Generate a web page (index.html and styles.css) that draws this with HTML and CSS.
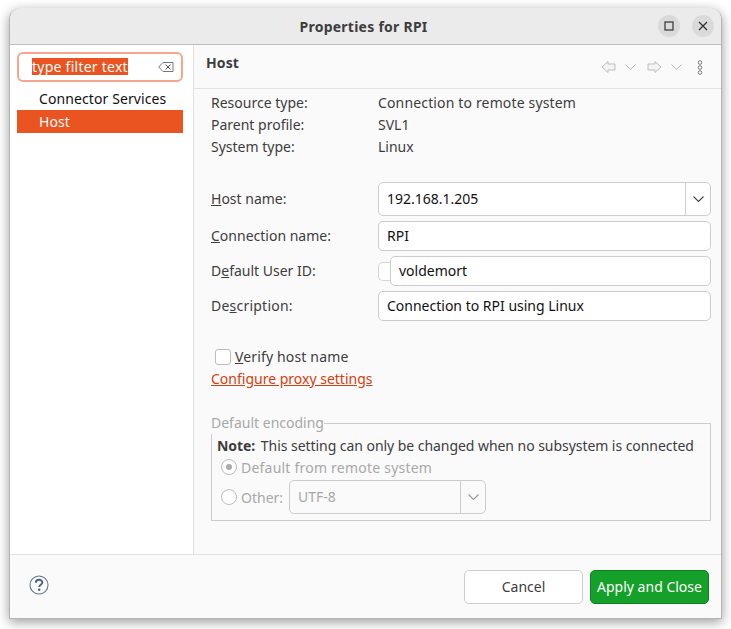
FILE: index.html
```html
<!DOCTYPE html>
<html lang="en">
<head>
    <meta charset="UTF-8">
    <title>Properties for RPI</title>
    <link rel="stylesheet" href="styles.css">
</head>
<body>
    <div class="window">
        <header class="titlebar">
            <h1>Properties for RPI</h1>
            <div class="window-buttons">
                <span class="round-btn"><svg width="10" height="10" viewBox="0 0 10 10"><rect x="1" y="1" width="8" height="8" fill="none" stroke="#333" stroke-width="1.2"/></svg></span>
                <span class="round-btn"><svg width="10" height="10" viewBox="0 0 10 10"><path d="M1 1l8 8M9 1l-8 8" fill="none" stroke="#333" stroke-width="1.3"/></svg></span>
            </div>
        </header>

        <div class="main">
            <aside class="sidebar">
                <div class="filter">
                    <span class="filter-text">type filter text</span>
                    <svg width="16" height="10" viewBox="0 0 16 10"><path d="M5 .5h10v9H5L.7 5z" fill="none" stroke="#777"/><path d="M7.5 2.5l5 5M12.5 2.5l-5 5" fill="none" stroke="#555"/></svg>
                </div>
                <ul class="tree">
                    <li>Connector Services</li>
                    <li class="selected">Host</li>
                </ul>
            </aside>

            <section class="content">
                <div class="content-head">
                    <h2>Host</h2>
                    <div class="toolbar">
                        <svg width="15" height="14" viewBox="0 0 15 14"><path d="M7 1.5L1 7l6 5.500V10h7V4H7z" fill="#f4f4f4" stroke="#bdbdbd"/></svg>
                        <svg class="chev" width="11" height="6" viewBox="0 0 11 6"><path d="M.5.5l5 5 5-5" fill="none" stroke="#b5b5b5"/></svg>
                        <svg width="15" height="14" viewBox="0 0 15 14"><path d="M8 1.500L14 7l-6 5.500V10H1V4h7z" fill="#f4f4f4" stroke="#bdbdbd"/></svg>
                        <svg class="chev" width="11" height="6" viewBox="0 0 11 6"><path d="M.5.5l5 5 5-5" fill="none" stroke="#b5b5b5"/></svg>
                        <svg class="dots" width="6" height="15" viewBox="0 0 6 15"><circle cx="3" cy="2.500" r="1.800" fill="#fff" stroke="#777"/><circle cx="3" cy="7.500" r="1.800" fill="#fff" stroke="#777"/><circle cx="3" cy="12.500" r="1.800" fill="#fff" stroke="#777"/></svg>
                    </div>
                </div>

                <div class="body">
                    <div class="info">
                        <span>Resource type:</span><span class="wide">Connection to remote system</span>
                        <span>Parent profile:</span><span>SVL1</span>
                        <span>System type:</span><span>Linux</span>
                    </div>

                    <div class="form">
                        <label><u>H</u>ost name:</label>
                        <div class="combo host-combo">
                            <span class="combo-value">192.168.1.205</span>
                            <span class="combo-arrow"><svg width="11" height="6" viewBox="0 0 11 6"><path d="M.5.5l5 5 5-5" fill="none" stroke="#444" stroke-width="1.100"/></svg></span>
                        </div>
                        <label><u>C</u>onnection name:</label>
                        <div class="field">RPI</div>
                        <label>D<u>e</u>fault User ID:</label>
                        <div class="user-row">
                            <span class="user-check"></span>
                            <div class="field user-field">voldemort</div>
                        </div>
                        <label class="wide-more">De<u>s</u>cription:</label>
                        <div class="field">Connection to RPI using Linux</div>
                    </div>

                    <div class="verify">
                        <span class="checkbox"></span>
                        <span class="wide"><u>V</u>erify host name</span>
                    </div>
                    <a class="proxy-link" href="#">Configure proxy settings</a>

                    <fieldset class="encoding">
                        <legend>Default encoding</legend>
                        <p class="note"><b>Note:</b> This setting can only be changed when no subsystem is connected</p>
                        <div class="radio-row">
                            <span class="radio checked"></span>
                            <span class="wide-more">Default from remote system</span>
                        </div>
                        <div class="radio-row other-row">
                            <span class="radio"></span>
                            <span>Other:</span>
                            <div class="combo encoding-combo">
                                <span class="combo-value">UTF-8</span>
                                <span class="combo-arrow"><svg width="11" height="6" viewBox="0 0 11 6"><path d="M.5.5l5 5 5-5" fill="none" stroke="#999" stroke-width="1.100"/></svg></span>
                            </div>
                        </div>
                    </fieldset>
                </div>
            </section>
        </div>

        <footer class="footer">
            <svg class="help" width="20" height="20" viewBox="0 0 21 21"><circle cx="10.500" cy="10.500" r="9.500" fill="#fbfbfb" stroke="#5f7396" stroke-width="1.100"/><path d="M7.200 8.200c0-4.300 6.800-4.300 6.800-.3 0 2.300-3.300 2.400-3.300 4.800" fill="none" stroke="#4a6088" stroke-width="2"/><circle cx="10.700" cy="15.500" r="1.300" fill="#4a6088"/></svg>
            <div class="actions">
                <button class="btn">Cancel</button>
                <button class="btn primary">Apply and Close</button>
            </div>
        </footer>
    </div>
</body>
</html>
```

FILE: styles.css
```css
* {
    box-sizing: border-box;
}

body {
    margin: 0;
    padding: 8px 9px 0;
    height: 629px;
    overflow: hidden;
    background: #fff;
    font-family: 'Noto Sans', sans-serif;
    font-size: 14px;
    color: #3d3d3d;
}

/* Window */
.window {
    width: 713px;
    height: 611px;
    display: flex;
    flex-direction: column;
    background: #fafafa;
    border: 1px solid #b4b4b4;
    border-top: 0;
    border-radius: 12px 12px 0 0;
    box-shadow: 0 3px 12px rgba(0, 0, 0, 0.4);
    overflow: hidden;
}

.titlebar {
    height: 37px;
    flex: none;
    display: flex;
    align-items: center;
    justify-content: center;
    padding-right: 4px;
    position: relative;
    background: #ebebeb;
    border-bottom: 1px solid #bdbdbd;
}

.titlebar h1 {
    margin: 0;
    font-size: 14px;
    font-weight: bold;
    letter-spacing: 0.25px;
    color: #3d3d3d;
}

.window-buttons {
    position: absolute;
    right: 7px;
    top: 7px;
    display: flex;
    gap: 12px;
}

.round-btn {
    width: 22px;
    height: 22px;
    border-radius: 50%;
    background: #dadada;
    display: flex;
    align-items: center;
    justify-content: center;
}

.main {
    flex: 1;
    display: flex;
    min-height: 0;
}

/* Left tree */
.sidebar {
    width: 184px;
    flex: none;
    padding: 7px 10px 0 7px;
    background: #fff;
    border-right: 1px solid #e2e2e2;
}

.filter {
    height: 30px;
    display: flex;
    align-items: center;
    justify-content: space-between;
    padding: 0 7px 2px 13px;
    background: #fff;
    border: 2px solid #f5a68c;
    border-radius: 6px;
}

.filter svg {
    margin-top: 2px;
}

.filter-text {
    background: #e95420;
    color: #fff;
    line-height: 17px;
    letter-spacing: 0.25px;
}

.tree {
    list-style: none;
    margin: 5px 0 0;
    padding: 0;
}

.tree li {
    height: 23px;
    line-height: 23px;
    padding-left: 22px;
    letter-spacing: 0.1px;
    color: #111;
}

.tree li.selected {
    background: #e95420;
    color: #fff;
}

/* Right side */
.content {
    flex: 1;
    display: flex;
    flex-direction: column;
    min-width: 0;
}

.content-head {
    height: 44px;
    flex: none;
    display: flex;
    justify-content: space-between;
    padding: 8px 18px 0 12px;
    border-bottom: 1px solid #e2e2e2;
    background: #fafafa;
}

.content-head h2 {
    margin: 0;
    font-size: 14px;
    font-weight: bold;
    letter-spacing: 0.1px;
    color: #3d3d3d;
}

.toolbar {
    display: flex;
    align-items: center;
    height: 18px;
    margin-top: 5px;
    gap: 9px;
}

.toolbar .dots {
    margin-left: 4px;
}

.toolbar .chev {
    margin-right: 2px;
}

.body {
    flex: 1;
    padding: 3px 10px 0 17px;
    background: #fafafa;
}

.info {
    display: grid;
    grid-template-columns: 167px 1fr;
    grid-auto-rows: 22px;
    line-height: 22px;
}

.wide {
    letter-spacing: 0.15px;
}

.wide-more {
    letter-spacing: 0.22px;
}

.form {
    display: grid;
    grid-template-columns: 167px 1fr;
    align-items: center;
    row-gap: 5px;
    margin-top: 24px;
}

.form label {
    padding-bottom: 2px;
}

.field,
.combo {
    height: 30px;
    background: #fff;
    border: 1px solid #cdcdcd;
    border-radius: 5px;
    color: #111;
    display: flex;
    align-items: center;
}

.field {
    padding: 0 0 2px 8px;
}

.host-combo {
    height: 34px;
}

.combo-value {
    flex: 1;
    padding: 0 0 2px 8px;
}

.combo-arrow {
    width: 25px;
    align-self: stretch;
    border-left: 1px solid #cdcdcd;
    display: flex;
    align-items: center;
    justify-content: center;
}

.user-row {
    display: flex;
    align-items: center;
}

.user-check {
    width: 14px;
    height: 19px;
    border: 1px solid #d5d5d5;
    border-right: 0;
    border-radius: 5px 0 0 5px;
    background: #fff;
}

.user-field {
    flex: 1;
    margin-left: -2px;
    position: relative;
}

.verify {
    display: flex;
    align-items: center;
    gap: 4px;
    margin: 26px 0 0 4px;
}

.checkbox {
    width: 16px;
    height: 16px;
    background: #fff;
    border: 1px solid #bdbdbd;
    border-radius: 3px;
}

.proxy-link {
    display: block;
    margin-top: 3px;
    color: #d3400f;
}

.encoding {
    margin: 25px 0 0;
    padding: 2px 5px 0;
    height: 108px;
    border: 1px solid #cdcdcd;
    color: #a8a8a8;
}

.encoding legend {
    padding: 0 0 2px;
    margin-left: -6px;
    color: #a8a8a8;
}

.note {
    margin: 0;
    letter-spacing: -0.05px;
    color: #3d3d3d;
}

.note b {
    margin-right: 2px;
}

.radio-row {
    display: flex;
    align-items: center;
    gap: 4px;
    height: 22px;
    margin: 1px 0 0 4px;
}

.other-row {
    height: 34px;
    margin-top: 2px;
}

.radio {
    width: 16px;
    height: 16px;
    border: 1px solid #bdbdbd;
    border-radius: 50%;
    background: #fff;
    display: flex;
    align-items: center;
    justify-content: center;
}

.radio.checked::after {
    content: "";
    width: 6px;
    height: 6px;
    border-radius: 50%;
    background: #aaa;
}

.encoding-combo {
    width: 197px;
    height: 34px;
    margin-left: 2px;
    background: #fafafa;
    color: #a8a8a8;
}

/* Bottom bar */
.footer {
    height: 64px;
    flex: none;
    display: flex;
    align-items: center;
    justify-content: space-between;
    padding: 1px 12px 0 19px;
    background: #fafafa;
    border-top: 1px solid #e2e2e2;
}

.help {
    margin-bottom: 5px;
}

.actions {
    display: flex;
    gap: 7px;
}

.btn {
    width: 119px;
    height: 34px;
    padding: 0 0 2px;
    font: inherit;
    color: #3d3d3d;
    background: #fff;
    border: 1px solid #cdcdcd;
    border-radius: 5px;
}

.btn.primary {
    background: #15a02a;
    border-color: #0f7f20;
    color: #fff;
}
```
